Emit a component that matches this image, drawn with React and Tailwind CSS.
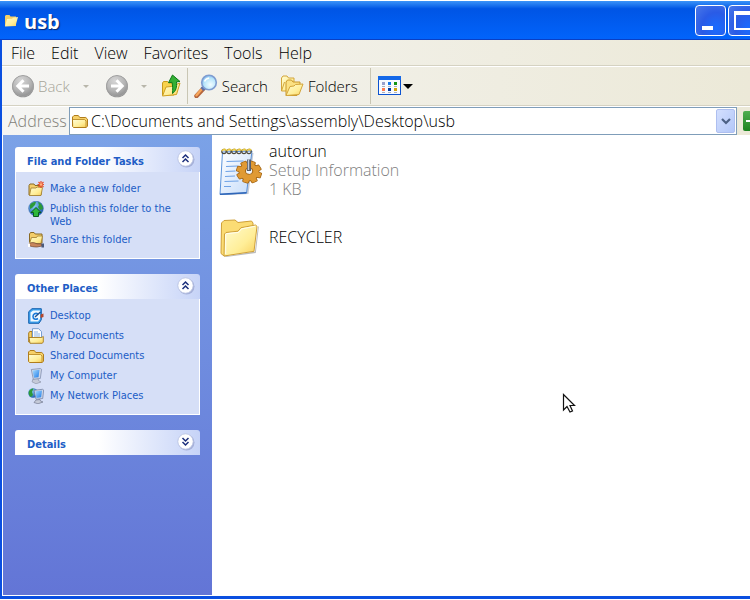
import { useState } from 'react'

const menus = ['File', 'Edit', 'View', 'Favorites', 'Tools', 'Help']

const tasks = [
  { label: 'Make a new folder', Icon: NewFolderIcon },
  { label: 'Publish this folder to the Web', Icon: PublishIcon },
  { label: 'Share this folder', Icon: ShareIcon },
]

const places = [
  { label: 'Desktop', Icon: DesktopIcon },
  { label: 'My Documents', Icon: DocumentsIcon },
  { label: 'Shared Documents', Icon: FolderIcon },
  { label: 'My Computer', Icon: ComputerIcon },
  { label: 'My Network Places', Icon: NetworkIcon },
]

const files = [
  { name: 'autorun', type: 'Setup Information', size: '1 KB', Icon: SetupFileIcon },
  { name: 'RECYCLER', Icon: BigFolderIcon },
]

// shared gradients, referenced by id from the icons below
function Gradients() {
  return (
    <svg width="0" height="0" className="absolute" aria-hidden="true">
      <defs>
        <linearGradient id="folder" x1="0" y1="0" x2="1" y2="1">
          <stop offset="0" stopColor="#fffcd2" />
          <stop offset="0.6" stopColor="#ffee98" />
          <stop offset="1" stopColor="#f8cf5a" />
        </linearGradient>
        <radialGradient id="grey" cx="0.4" cy="0.25" r="0.8">
          <stop offset="0" stopColor="#d6d6d6" />
          <stop offset="0.6" stopColor="#b4b4b4" />
          <stop offset="1" stopColor="#8c8c8c" />
        </radialGradient>
        <radialGradient id="lens" cx="0.6" cy="0.65" r="0.7">
          <stop offset="0" stopColor="#f2fdff" />
          <stop offset="0.6" stopColor="#b9e6fb" />
          <stop offset="1" stopColor="#7cb8ee" />
        </radialGradient>
        <linearGradient id="screen" x1="0" y1="0" x2="1" y2="1">
          <stop offset="0" stopColor="#a8dcff" />
          <stop offset="1" stopColor="#1f7be8" />
        </linearGradient>
        <radialGradient id="globe" cx="0.35" cy="0.3" r="0.8">
          <stop offset="0" stopColor="#8fd0f8" />
          <stop offset="1" stopColor="#0f4fa8" />
        </radialGradient>
        <linearGradient id="paper" x1="0" y1="0" x2="1" y2="1">
          <stop offset="0" stopColor="#ffffff" />
          <stop offset="1" stopColor="#c5dcfa" />
        </linearGradient>
      </defs>
    </svg>
  )
}

function NavIcon({ flip }) {
  return (
    <svg className="size-6 shrink-0" viewBox="0 0 24 24">
      <circle cx="12" cy="12.5" r="10.8" fill="#8b8b8b" />
      <circle cx="12" cy="12" r="10.5" fill="url(#grey)" stroke="#a2a2a2" />
      <path
        d={flip ? 'M6 12h10.5M11.500 6.300l5.700 5.700-5.700 5.700' : 'M18 12H7.500M12.500 6.300L6.800 12l5.700 5.700'}
        fill="none" stroke="#fff" strokeWidth="3"
      />
    </svg>
  )
}

function UpIcon() {
  return (
    <svg className="h-6 w-5 shrink-0" viewBox="0 0 20 24">
      <path d="M1.500 21V9l1-1.500h4L8 9h5v12z" fill="#f8d24c" stroke="#c79a1c" />
      <path d="M1.500 22l3.500-9 5-.5 9-3.500-3.500 11.500z" fill="url(#folder)" stroke="#d0a020" />
      <path d="M11.500 1l7.500 6.500-3.500.3c.5 5.200-.5 9.200-4 11.700.3-4 .3-7.500-.5-11.200l-3.500.4z" fill="#35b035" stroke="#0f7a18" />
    </svg>
  )
}

function SearchIcon() {
  return (
    <svg className="size-6 shrink-0" viewBox="0 0 24 24">
      <path d="M2.500 22l7-7.500" stroke="#b5653c" strokeWidth="4.500" strokeLinecap="round" />
      <path d="M2.500 21.300l6-7" stroke="#f7a65a" strokeWidth="2.400" strokeLinecap="round" />
      <path d="M8 15.500l2-2" stroke="#5b70a8" strokeWidth="4" />
      <circle cx="15" cy="8.500" r="7.300" fill="url(#lens)" stroke="#7f9cd0" strokeWidth="1.600" />
      <path d="M10.500 7.500c.8-2.200 2.500-3.300 4.700-3.500" fill="none" stroke="#fff" strokeWidth="1.500" />
    </svg>
  )
}

function FoldersIcon() {
  return (
    <svg className="size-6 shrink-0" viewBox="0 0 24 24">
      <path d="M1.500 17V4l1.500-2h4l1.500 2h5.500v4L9 17z" fill="url(#folder)" stroke="#d3a53a" />
      <path d="M1.500 17l3-9" stroke="#d3a53a" />
      <path d="M6 21.500V8l1.500-2h4L13 8h7v4l-3 9.500z" fill="#fbe183" stroke="#c9982c" />
      <path d="M6 21.500l4-9 4-.5 1.500-1.500 7.500-.5-4 10.500z" fill="url(#folder)" stroke="#d3a53a" />
    </svg>
  )
}

function ViewsIcon() {
  return (
    <svg className="h-5 w-6 shrink-0" viewBox="0 0 24 20">
      <rect x="0.5" y="0.5" width="22" height="18" fill="#f8faff" stroke="#0c53d0" />
      <path d="M0 0h23v4H0z" fill="#1468e8" />
      <path d="M4 6h3v3H4z" fill="#98a0cc" />
      <path d="M10 6h3v3h-3z" fill="#1679ea" />
      <path d="M16 6h3v3h-3z" fill="#149414" />
      <path d="M4 12h3v3H4z" fill="#ff7d50" />
      <path d="M10 12h3v3h-3z" fill="#063a9c" />
      <path d="M16 12h3v3h-3z" fill="#d3a208" />
      <path d="M4 10.500h3M10 10.500h3M16 10.500h3M4 16.500h3M10 16.500h3M16 16.500h3" stroke="#aab0bd" />
    </svg>
  )
}

function Caret({ className }) {
  return (
    <svg className={className} viewBox="0 0 10 5">
      <path d="M0 0h10L5 5z" fill="currentColor" />
    </svg>
  )
}

function OpenFolderIcon() {
  return (
    <svg className="h-4 w-[14px] shrink-0" viewBox="0 0 14 16">
      <path d="M1 13V3l1-1h3.500l1 1.500H12V13z" fill="#f3cf68" />
      <path d="M1 13.500l2-7.500 5-.3 1-1L14 4l-2.500 9z" fill="url(#folder)" />
    </svg>
  )
}

function FolderIcon() {
  return (
    <svg className="size-4 shrink-0" viewBox="0 0 16 16">
      <path d="M.5 13.500V4L2 2.500h4.300l1.500 2h6l1.700 1.700V13l-1.200 1.500H1.500z" fill="#f6d068" stroke="#b07d1c" />
      <path d="M1 7h11.500l1.500 1v6H1.500z" fill="url(#folder)" />
      <path d="M1 6.500h11.500l1.500 1.500v6" fill="none" stroke="#c39632" />
    </svg>
  )
}

function NewFolderIcon() {
  return (
    <svg className="size-4 shrink-0" viewBox="0 0 16 16">
      <path d="M1 14V4.500L2 3h4l1 1.500h6V14z" fill="#f3cd6a" stroke="#8a6a24" />
      <path d="M1.500 14.500l1.500-7.500h5l1-1 5.500.5-1.500 8z" fill="url(#folder)" stroke="#a07c2c" strokeWidth="0.800" />
      <path d="M13 0v7M9.500 3.500h7M10.500 1l5 5M15.500 1l-5 5" stroke="#e8502a" strokeWidth="1.200" />
      <circle cx="13" cy="3.500" r="1.300" fill="#ffb080" />
    </svg>
  )
}

function PublishIcon() {
  return (
    <svg className="size-4 shrink-0" viewBox="0 0 16 16">
      <circle cx="8" cy="7.500" r="7.300" fill="url(#globe)" stroke="#2a62a8" strokeWidth="0.600" />
      <path d="M2 4c2-3 4-3 6-3l-1 3-3 3-2 1zM10 1c3 1 5 4 5 7l-3 1-2-3 1-2z" fill="#2c9a38" />
      <path d="M8 6.500l5 5h-2.500v4h-5v-4H3z" fill="#2db83a" stroke="#0a5b1c" strokeWidth="1" />
    </svg>
  )
}

function ShareIcon() {
  return (
    <svg className="size-4 shrink-0" viewBox="0 0 16 16">
      <path d="M1.500 10V2l1-1.500H6L7.200 2H14v9z" fill="#f3cd6a" stroke="#8a6a24" />
      <path d="M1.500 11.500l2-6h5L9.500 4h5L13 11.500z" fill="url(#folder)" stroke="#a07c2c" strokeWidth="0.800" />
      <path d="M1 11.500c3-1.500 5-1 8 .3l5 .2v2l-5 1c-3 0-6-.5-8-1.500z" fill="#c8865c" stroke="#6f4630" strokeWidth="0.700" />
      <path d="M0 11.500h2V15H0z" fill="#fff" />
      <path d="M13.500 11.500H16v4h-2.500z" fill="#4a5a7c" />
    </svg>
  )
}

function DesktopIcon() {
  return (
    <svg className="size-4 shrink-0" viewBox="0 0 16 16">
      <path d="M.7 3.700L4 .7h9.300v11L11 15.300H.7z" fill="#3da2ee" stroke="#1560ae" />
      <path d="M2.500 4.500L5 2.500h7v8.500l-2 2.500H2.500z" fill="#eff8ff" />
      <path d="M10 6c-2.500-1.500-5 0-5 2.500s2.500 3.500 5 2" fill="none" stroke="#1b7ad8" strokeWidth="1.600" />
      <path d="M7 9l5.500-5" stroke="#20508c" strokeWidth="1.400" />
      <path d="M12.500 6.500l3-1V9l-3 1z" fill="#b5482c" />
    </svg>
  )
}

function DocumentsIcon() {
  return (
    <svg className="size-4 shrink-0" viewBox="0 0 16 16">
      <path d="M.7 14V5l1-1.500H4v11z" fill="#f6d068" stroke="#a87a1e" />
      <path d="M4.500 11V.7h6l3 2.800V11z" fill="#fff" stroke="#6c95cc" strokeWidth="0.900" />
      <path d="M6 4h4M6 6h6M6 8h6" stroke="#8db4e6" />
      <path d="M1 9.500h12.500l1.800-1V14l-1 1.300H2z" fill="url(#folder)" stroke="#a87a1e" strokeWidth="0.900" />
    </svg>
  )
}

function ComputerIcon() {
  return (
    <svg className="size-4 shrink-0" viewBox="0 0 16 16">
      <path d="M5 11l5-1 .5 2.500L13 14l-5 1.800-4-2z" fill="#c5cad8" stroke="#858ca0" strokeWidth="0.600" />
      <path d="M3.300 1.500l9-1 1.300.8-1.300 9.200-7 .8z" fill="#cfd6e6" stroke="#7986a8" strokeWidth="0.700" />
      <path d="M4.500 2.500l7-.8-1 7.500-4.500.6z" fill="url(#screen)" />
    </svg>
  )
}

function NetworkIcon() {
  return (
    <svg className="size-4 shrink-0" viewBox="0 0 16 16">
      <circle cx="5" cy="5" r="4.800" fill="url(#globe)" />
      <path d="M1 3c1.500-2 3-2.500 4.500-2.500L4 4l1 3-2 2c-2-1-3-3.500-2-6z" fill="#2c9a38" />
      <path d="M8 12l4-.5.5 1.500 2.500 1-5 1.800-4-1.300z" fill="#c5cad8" stroke="#737a90" strokeWidth="0.700" />
      <path d="M6 2.300l8.500-1 1.200.7-1 8.500-6.700.8z" fill="#cfd6e6" stroke="#6a789c" strokeWidth="0.700" />
      <path d="M7.200 3.300l6.800-.8-.8 6.800-4.700.6z" fill="url(#screen)" />
    </svg>
  )
}

function SetupFileIcon() {
  const rings = [5, 10, 15, 20, 25, 30]
  const teeth = [10, 55, 100, 145, 190, 235, 280, 325]
  return (
    <svg className="h-12 w-11 shrink-0" viewBox="0 0 44 48">
      <path d="M6 6.500l28.500-.5-5 41L3 48.500z" fill="#5b6a86" opacity="0.350" />
      <path d="M3.500 5L33 4l-5.500 42L1 47.500z" fill="url(#paper)" stroke="#5b93da" />
      <path d="M1 47.300l26.500-1.500" stroke="#2f66b8" strokeWidth="1.500" />
      <path d="M7.500 14.500l17-.5M7 19.500l12-.5M6.500 24.500l10-.5M6 29.500l10-.5M5.500 34.500l14-.5M5 39.500h7" stroke="#6ea2e6" strokeWidth="1.200" />
      {rings.map(x => (
        <g key={x} fill="none">
          <circle cx={x} cy="4.500" r="2.200" stroke="#4f4a3c" strokeWidth="1.200" />
          <path d={`M${x - 2} 4a2.200 2.200 0 0 1 4-.5`} stroke="#e8c840" strokeWidth="1.600" />
        </g>
      ))}
      <g transform="translate(30 25) rotate(8) scale(1 .88)">
        <g fill="#9c5f10">
          {teeth.map(a => <rect key={a} x="-3.500" y="-13" width="7" height="13" rx="1.500" transform={`rotate(${a})`} />)}
          <circle r="10.500" />
        </g>
        <g fill="#e09a34">
          {teeth.map(a => <rect key={a} x="-2.700" y="-12.300" width="5.400" height="12" rx="1" transform={`rotate(${a})`} />)}
          <circle r="9.700" />
        </g>
        <circle cy="-1" r="3.600" fill="#eef5ff" stroke="#a4640f" />
      </g>
      <path d="M30 12.500V24" stroke="#565e6c" strokeWidth="4" />
      <path d="M29.500 12.500V23" stroke="#c2c9d4" strokeWidth="1.400" />
    </svg>
  )
}

function BigFolderIcon() {
  return (
    <svg className="h-10 w-11 shrink-0" viewBox="2 0 44 40">
      <path d="M7 39.500l31-5L41 9l.8 1-3 26L9 40z" fill="#666" opacity="0.450" />
      <path d="M4 36.500L4.500 6l2.500-2.500 11-.5 3 2.500L34.500 4l1.500 2v26L7 39z" fill="#fbdc74" stroke="#cfa038" />
      <path d="M7 39L7.500 17l1.500-1.500 12-1.300 3-3.500L38.500 8l1.500 1.300-3 25z" fill="url(#folder)" stroke="#cfa038" strokeLinejoin="round" />
      <path d="M8.700 37V17.500l.8-.8 12-1.300 3-3.500L38 9.300" fill="none" stroke="#fffef0" />
    </svg>
  )
}

function TitleButton({ label, children }) {
  return (
    <button
      aria-label={label}
      className="size-[31px] shrink-0 rounded-[4px] border border-white bg-radial-[at_70%_75%] from-[#1a6cff] via-[#2a5be6] to-[#4a78e8]"
    >
      <svg className="size-full" viewBox="0 0 29 29">{children}</svg>
    </button>
  )
}

function Panel({ title, items, startOpen = true }) {
  const [open, setOpen] = useState(startOpen)
  return (
    <section>
      <h2>
        <button
          onClick={() => setOpen(!open)}
          aria-expanded={open}
          className="flex h-[25px] w-full items-start justify-between rounded-t-[3px] bg-linear-to-r from-white from-45% to-[#c6d3f7] pt-[3px] pr-[5px] pl-3 text-left text-[11px] font-bold text-[#215dc6]"
        >
          <span className="pt-1">{title}</span>
          <svg className="size-[18px]" viewBox="0 0 18 18">
            <circle cx="9.500" cy="9.500" r="8" fill="#8d98c4" opacity="0.600" />
            <circle cx="8.500" cy="8.500" r="7.700" fill="#fff" stroke="#b5bfe0" strokeWidth="0.800" />
            <path
              d={open ? 'M5.500 8l3-3 3 3M5.500 12l3-3 3 3' : 'M5.500 5l3 3 3-3M5.500 9l3 3 3-3'}
              fill="none" stroke="#1c2f7c" strokeWidth="1.500"
            />
          </svg>
        </button>
      </h2>
      {open && items && (
        <ul className="flex flex-col gap-1 border border-t-0 border-white bg-[#d6dff7] px-3 pt-[9px] pb-2.5">
          {items.map(({ label, Icon }) => (
            <li key={label}>
              <a href="#" className="flex items-start gap-1.5 text-[11px] leading-[13px] text-[#215dc6] hover:underline">
                <Icon />
                <span className="max-w-[124px] pt-px">{label}</span>
              </a>
            </li>
          ))}
        </ul>
      )}
    </section>
  )
}

function Cursor() {
  return (
    <svg className="absolute top-[258px] left-[350px] h-5 w-4" viewBox="0 0 16 20">
      <path d="M1.500 1.500v15.500l3.500-3.500 3 5.500 2.500-1-2.500-5.500h4.500z" fill="#fff" stroke="#111" strokeWidth="1.200" />
    </svg>
  )
}

export default function App() {
  const [path, setPath] = useState('C:\\Documents and Settings\\assembly\\Desktop\\usb')

  return (
    <div className="flex min-h-screen flex-col overflow-hidden bg-white pb-px font-['Open_Sans','Noto_Sans',sans-serif] text-black">
      <Gradients />

      <header className="mt-px flex h-[39px] items-center bg-linear-to-b from-[#3a93f8] via-[#0055e5] via-20% to-[#0264fc] pl-1 shadow-[inset_0_-1px_0_#0a3fc4]">
        <OpenFolderIcon />
        <h1 className="ml-1.5 flex-1 pt-0.5 text-xl font-bold text-white [text-shadow:1px_1px_1px_#0a246a]">usb</h1>
        <div className="flex w-[55px] gap-0.5 overflow-hidden">
          <TitleButton label="Minimize">
            <path d="M6 20h11v4H6z" fill="#fff" />
          </TitleButton>
          <TitleButton label="Maximize">
            <path d="M5 5h19v19H5zM7 9v13h15V9z" fill="#fff" fillRule="evenodd" />
          </TitleButton>
        </div>
      </header>

      <div className="flex flex-1 flex-col border-b-[3px] border-l-2 border-[#0a4fe0]">
        <div className="bg-linear-to-r from-[#f5f5f3] to-[#ece9d8] font-light">
          <nav className="flex h-[26px] items-center gap-4 border-b border-[#d5d2c2] pl-[9px] text-base">
            {menus.map(m => <button key={m}>{m}</button>)}
          </nav>

          <div className="flex h-10 items-center border-t border-b border-t-white border-b-[#d5d2c2] pl-[9px] text-[15px]">
            <button disabled className="flex items-center gap-[3px] text-[#a6a498]">
              <NavIcon />
              Back
            </button>
            <button disabled aria-label="Back history" className="ml-[13px] text-[#b8b6aa]"><Caret className="h-[3px] w-1.5" /></button>
            <button disabled aria-label="Forward" className="ml-4"><NavIcon flip /></button>
            <button disabled aria-label="Forward history" className="ml-3 text-[#b8b6aa]"><Caret className="h-[3px] w-1.5" /></button>
            <button aria-label="Up" className="ml-3.5"><UpIcon /></button>
            <div className="mx-1.5 h-9 w-px bg-[#c9c6b4]" />
            <button className="flex items-center gap-1"><SearchIcon />Search</button>
            <button className="ml-3 flex items-center gap-1"><FoldersIcon />Folders</button>
            <div className="mr-[7px] ml-3 h-9 w-px bg-[#c9c6b4]" />
            <button aria-label="Views" className="flex items-center gap-px">
              <ViewsIcon />
              <Caret className="h-[5px] w-2.5" />
            </button>
          </div>

          <div className="flex h-[29px] items-center border-t border-white pl-1.5 text-base">
            <label htmlFor="address" className="w-[61px] shrink-0 text-[#83827a]">Address</label>
            <div className="flex h-[28px] flex-1 items-center gap-0.5 border border-[#7f9db9] bg-white px-px">
              <span className="pl-px"><FolderIcon /></span>
              <input
                id="address"
                value={path}
                onChange={e => setPath(e.target.value)}
                className="min-w-0 flex-1 pl-px outline-none"
              />
              <button aria-label="Show addresses" className="grid h-6 w-[19px] place-items-center rounded-xs border border-[#aebff0] bg-linear-to-br from-[#d3dffe] to-[#b3c7f8]">
                <svg className="h-[7px] w-[10px]" viewBox="0 0 10 7">
                  <path d="M1 1l4 4 4-4" fill="none" stroke="#4d6185" strokeWidth="2.200" />
                </svg>
              </button>
            </div>
            <div className="ml-1.5 w-[7px] overflow-hidden">
              <button aria-label="Go" className="block h-5 w-5 rounded-xs bg-linear-to-b from-[#4fae4f] to-[#1c831f]">
                <svg className="size-5" viewBox="0 0 20 20">
                  <path d="M3 10h13M11 5l5 5-5 5" fill="none" stroke="#fff" strokeWidth="2" />
                </svg>
              </button>
            </div>
          </div>
        </div>

        <div className="flex flex-1 border-b border-l border-white">
          <aside className="flex w-[209px] shrink-0 flex-col gap-[15px] bg-linear-to-b from-[#7ba2e7] to-[#6375d6] px-3 pt-3 font-['DejaVu_Sans_Condensed','DejaVu_Sans',sans-serif]">
            <Panel title="File and Folder Tasks" items={tasks} />
            <Panel title="Other Places" items={places} />
            <Panel title="Details" startOpen={false} />
          </aside>

          <main className="relative flex-1 bg-white pt-[7px] pl-[7px]">
            <ul className="flex flex-col gap-[18px]">
              {files.map(({ name, type, size, Icon }) => (
                <li key={name} className="flex items-center gap-1.5">
                  <Icon />
                  <div className="text-base leading-[19px] font-light">
                    <p>{name}</p>
                    {type && <p className="text-[#808080]">{type}</p>}
                    {size && <p className="text-[#808080]">{size}</p>}
                  </div>
                </li>
              ))}
            </ul>
            <Cursor />
          </main>
        </div>
      </div>
    </div>
  )
}
